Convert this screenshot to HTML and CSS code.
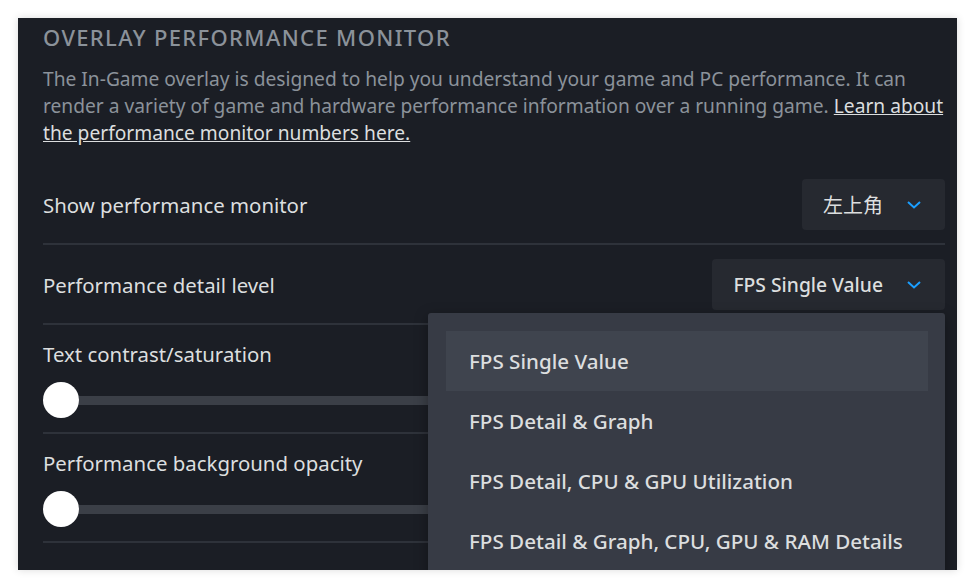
FILE: index.html
```html
<!DOCTYPE html>
<html lang="en">
<head>
    <meta charset="UTF-8">
    <meta name="viewport" content="width=device-width, initial-scale=1.0">
    <title>Overlay performance monitor</title>
    <link rel="stylesheet" href="styles.css">
</head>
<body>
    <div class="panel">
        <h2 class="section-title">Overlay Performance Monitor</h2>
        <p class="description">
            The In-Game overlay is designed to help you understand your game and PC performance. It can
            render a variety of game and hardware performance information over a running game.
            <a href="#">Learn about the performance monitor numbers here.</a>
        </p>

        <div class="row">
            <span class="label">Show performance monitor</span>
            <div class="dropdown">
                <span class="cjk">左上角</span>
                <svg class="chevron" viewBox="0 0 14 8"><path d="M1 1l6 5.5L13 1"/></svg>
            </div>
        </div>

        <div class="row dropdown-row">
            <span class="label">Performance detail level</span>
            <div class="dropdown">
                <span>FPS Single Value</span>
                <svg class="chevron" viewBox="0 0 14 8"><path d="M1 1l6 5.5L13 1"/></svg>
            </div>
            <ul class="menu">
                <li class="selected">FPS Single Value</li>
                <li>FPS Detail &amp; Graph</li>
                <li>FPS Detail, CPU &amp; GPU Utilization</li>
                <li>FPS Detail &amp; Graph, CPU, GPU &amp; RAM Details</li>
            </ul>
        </div>

        <div class="row slider-row">
            <span class="label">Text contrast/saturation</span>
            <div class="slider">
                <div class="track"></div>
                <div class="knob"></div>
            </div>
        </div>

        <div class="row slider-row">
            <span class="label">Performance background opacity</span>
            <div class="slider">
                <div class="track"></div>
                <div class="knob"></div>
            </div>
        </div>
    </div>
</body>
</html>
```

FILE: styles.css
```css
*{
    margin: 0;
    padding: 0;
    box-sizing: border-box;
}

:root{
    --page: #ffffff;
    --panel: #1b1e25;
    --line: #2e323a;
    --muted: #8b929a;
    --text: #dcdedf;
    --field: #262930;
    --menu: #373b45;
    --menuHover: #3f444e;
    --track: #3b3f47;
    --blue: #1a9fff;
}

body{
    background-color: var(--page);
    font-family: "Noto Sans", "Liberation Sans", "Noto Sans CJK SC", sans-serif;
    padding: 18px;
    height: 588px;
    overflow: hidden;
}

.panel{
    width: 939px;
    height: 552px;
    background-color: var(--panel);
    box-shadow: 0 0 8px rgba(0, 0, 0, 0.15);
    padding: 5px 12px 0 25px;
    overflow: hidden;
    color: var(--text);
}

.section-title{
    font-size: 22px;
    line-height: 28px;
    font-weight: 500;
    text-transform: uppercase;
    letter-spacing: 1.35px;
    color: var(--muted);
}

.description{
    margin-top: 14px;
    margin-right: -6px;
    font-size: 19.2px;
    line-height: 27px;
    color: var(--muted);
}

.description a{
    color: var(--text);
    text-decoration: underline;
}

.row{
    display: flex;
    align-items: center;
    justify-content: space-between;
    padding: 14px 0 13px 0;
    border-bottom: 2px solid var(--line);
}

.row:first-of-type{
    margin-top: 19px;
}

.label{
    font-size: 20.4px;
    line-height: 28px;
    color: var(--text);
}

.dropdown{
    display: flex;
    align-items: center;
    gap: 24px;
    height: 51px;
    padding: 0 24px 0 21px;
    background-color: var(--field);
    border-radius: 4px;
    font-size: 19.3px;
    font-weight: 500;
    color: var(--text);
}

.cjk{
    font-family: "Noto Sans CJK SC", sans-serif;
    font-size: 20px;
    font-weight: 400;
}

.chevron{
    width: 14px;
    height: 8px;
    fill: none;
    stroke: var(--blue);
    stroke-width: 2;
}

.dropdown-row{
    position: relative;
}

.menu{
    position: absolute;
    top: 68px;
    right: 0;
    width: 517px;
    padding: 18px 17px 18px 18px;
    list-style: none;
    background-color: var(--menu);
    border-radius: 3px;
    box-shadow: 0 4px 14px rgba(0, 0, 0, 0.35);
    z-index: 2;
}

.menu li{
    height: 60px;
    display: flex;
    align-items: center;
    padding-left: 23px;
    font-size: 20.6px;
    font-weight: 500;
    color: var(--text);
}

.menu li.selected{
    background-color: var(--menuHover);
}

.slider-row{
    flex-direction: column;
    align-items: stretch;
    gap: 14px;
    padding: 15px 0 14px 0;
}

.slider{
    display: flex;
    align-items: center;
    height: 36px;
}

.knob{
    order: -1;
    width: 36px;
    height: 36px;
    border-radius: 50%;
    background-color: #fff;
    flex-shrink: 0;
}

.track{
    flex: 1;
    height: 9px;
    background-color: var(--track);
}
```
